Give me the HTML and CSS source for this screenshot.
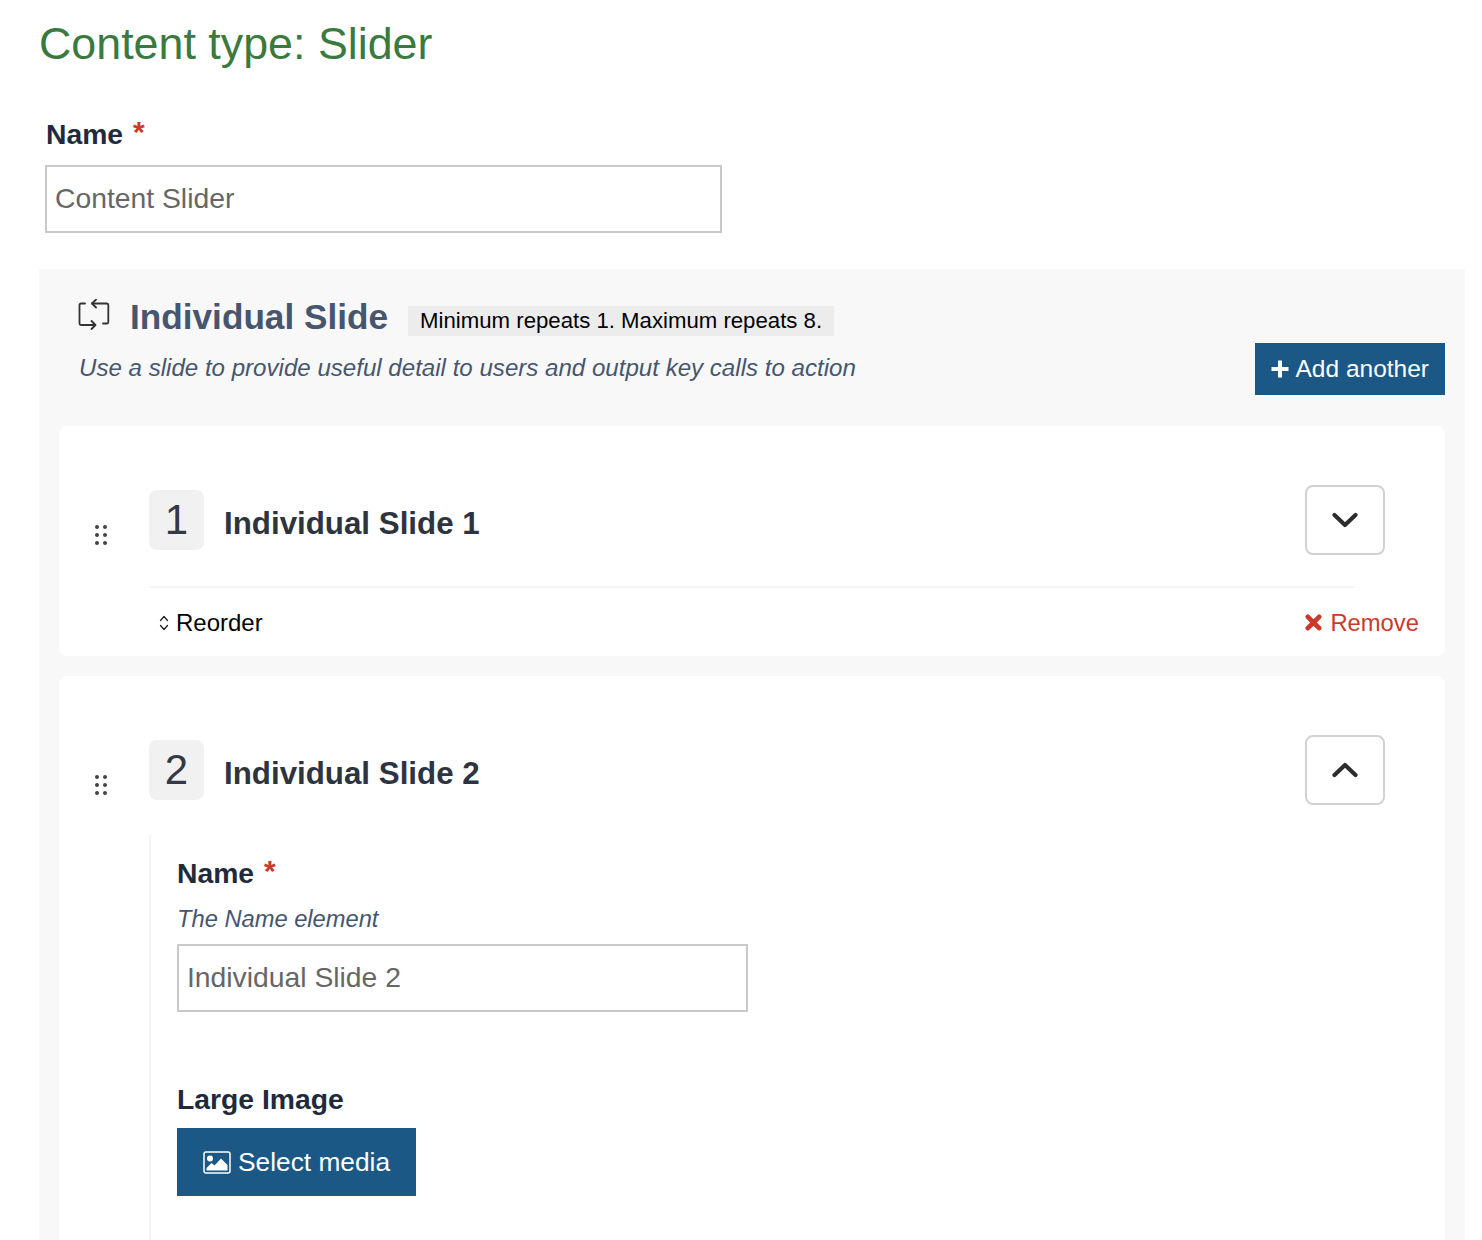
FILE: index.html
```html
<!DOCTYPE html>
<html>
<head>
    <title>Content type: Slider</title>
    <link rel="stylesheet" href="styles.css">
</head>
<body>
    <h1 class="page-title">Content type: Slider</h1>

    <div class="field top-field">
        <label class="field-label">Name <span class="required">*</span></label>
        <input type="text" class="text-input wide" value="Content Slider">
    </div>

    <section class="repeater">
        <div class="repeater-head">
            <div class="repeater-info">
                <div class="repeater-title-row">
                    <svg class="repeat-icon" width="32" height="32" viewBox="0 0 32 32" fill="none" stroke="#333" stroke-width="1.8" stroke-linecap="round" stroke-linejoin="round">
                        <path d="M7 4.500H3a1.500 1.500 0 0 0-1.500 1.500V24.500a1.500 1.500 0 0 0 1.500 1.500H17"/>
                        <path d="M13.500 22l4 4-4 4"/>
                        <path d="M14 4.500H28.800a1.500 1.500 0 0 1 1.500 1.500V23a1.500 1.500 0 0 1-1.500 1.500H25"/>
                        <path d="M18 0.500l-4 4 4 4"/>
                    </svg>
                    <h2 class="repeater-title">Individual Slide</h2>
                    <span class="repeat-limits">Minimum repeats 1. Maximum repeats 8.</span>
                </div>
                <p class="repeater-desc">Use a slide to provide useful detail to users and output key calls to action</p>
            </div>
            <button class="btn add-btn">
                <svg width="18" height="18" viewBox="0 0 18 18" fill="#fff"><path d="M7 0.500h4V7h6.500v4H11v6.500H7V11H0.500V7H7z"/></svg>
                Add another
            </button>
        </div>

        <div class="slide-card">
            <div class="slide-head">
                <svg class="drag-icon" width="14" height="22" viewBox="0 0 14 22" fill="#444">
                    <circle cx="3" cy="3" r="2"/><circle cx="11" cy="3" r="2"/>
                    <circle cx="3" cy="11" r="2"/><circle cx="11" cy="11" r="2"/>
                    <circle cx="3" cy="19" r="2"/><circle cx="11" cy="19" r="2"/>
                </svg>
                <span class="slide-num">1</span>
                <h3 class="slide-title">Individual Slide 1</h3>
                <button class="toggle-btn">
                    <svg width="26" height="16" viewBox="0 0 26 16" fill="none" stroke="#2d2d2d" stroke-width="4.200" stroke-linecap="round" stroke-linejoin="round"><path d="M2.500 3l10.500 10L23.500 3"/></svg>
                </button>
            </div>
            <div class="slide-foot">
                <span class="reorder">
                    <svg width="10" height="16" viewBox="0 0 10 16" fill="none" stroke="#222" stroke-width="1.300" stroke-linecap="round" stroke-linejoin="round"><path d="M1.500 5.500L5 1.500l3.500 4M1.500 10.500L5 14.500l3.500-4"/></svg>
                    Reorder
                </span>
                <span class="remove">
                    <svg width="17" height="17" viewBox="0 0 18 18" fill="none" stroke="#c93a2b" stroke-width="5" stroke-linecap="round"><path d="M3 3l12 12M15 3L3 15"/></svg>
                    Remove
                </span>
            </div>
        </div>

        <div class="slide-card">
            <div class="slide-head">
                <svg class="drag-icon" width="14" height="22" viewBox="0 0 14 22" fill="#444">
                    <circle cx="3" cy="3" r="2"/><circle cx="11" cy="3" r="2"/>
                    <circle cx="3" cy="11" r="2"/><circle cx="11" cy="11" r="2"/>
                    <circle cx="3" cy="19" r="2"/><circle cx="11" cy="19" r="2"/>
                </svg>
                <span class="slide-num">2</span>
                <h3 class="slide-title">Individual Slide 2</h3>
                <button class="toggle-btn">
                    <svg width="26" height="16" viewBox="0 0 26 16" fill="none" stroke="#2d2d2d" stroke-width="4.200" stroke-linecap="round" stroke-linejoin="round"><path d="M2.500 13L13 3l10.500 10"/></svg>
                </button>
            </div>
            <div class="slide-body">
                <div class="field">
                    <label class="field-label">Name <span class="required">*</span></label>
                    <p class="field-help">The Name element</p>
                    <input type="text" class="text-input narrow" value="Individual Slide 2">
                </div>
                <div class="field media-field">
                    <label class="field-label">Large Image</label>
                    <button class="btn media-btn">
                        <svg width="28" height="23" viewBox="0 0 28 23"><rect x="1" y="1" width="26" height="21" rx="2" fill="none" stroke="#fff" stroke-width="1.500"/><circle cx="7" cy="7.500" r="3" fill="#fff"/><path d="M3.500 19.500v-2.500l5-5 3 2.500 6.500-7 6.500 6.500v5.500z" fill="#fff"/></svg>
                        Select media
                    </button>
                </div>
            </div>
        </div>
    </section>
</body>
</html>
```

FILE: styles.css
```css
html, body {
    height: 1240px;
    overflow: hidden;
}

body {
    margin: 0;
    padding: 0 17px 0 39px;
    background-color: #fff;
    font-family: "Liberation Sans", Arial, sans-serif;
    color: #1f2a3c;
}

.page-title {
    margin: 0;
    padding-top: 17px;
    font-size: 44.8px;
    line-height: 52px;
    font-weight: 400;
    color: #3b7a3f;
}

.field-label {
    display: block;
    font-size: 28.300px;
    line-height: 32px;
    font-weight: 700;
    color: #1f2a3c;
}

.required {
    display: inline-block;
    margin-left: 2px;
    font-size: 30px;
    line-height: 30px;
    color: #c93a2b;
    transform: translateY(-2px);
}

.top-field {
    padding: 49px 0 36px 6px;
}

.top-field .field-label {
    margin: 0 0 15px 1px;
}

.text-input {
    display: block;
    height: 68px;
    box-sizing: border-box;
    padding: 0 8px 2px;
    border: 2px solid #c9c9c9;
    background-color: #fff;
    font-family: inherit;
    font-size: 28.300px;
    color: #666;
}

.wide {
    width: 677px;
}

.narrow {
    width: 571px;
}

.repeater {
    padding: 28px 20px 0;
    background-color: #f8f8f8;
}

.repeater-head {
    display: flex;
    justify-content: space-between;
    align-items: flex-end;
    padding-bottom: 31px;
}

.repeater-info {
    padding-left: 20px;
    padding-bottom: 12px;
}

.repeater-title-row {
    display: flex;
    align-items: center;
    height: 42px;
}

.repeat-icon {
    margin: -6px 20px 0 -1px;
}

.repeater-title {
    align-self: flex-start;
    margin: 0 20px 0 0;
    font-size: 35.200px;
    line-height: 40px;
    font-weight: 700;
    color: #46566e;
}

.repeat-limits {
    margin-top: 6px;
    padding: 0 12px;
    background-color: #ececec;
    font-size: 22.200px;
    line-height: 30px;
    color: #000;
}

.repeater-desc {
    margin: 14px 0 0;
    font-size: 24.100px;
    line-height: 30px;
    font-style: italic;
    color: #46566e;
}

.btn {
    display: flex;
    align-items: center;
    border: 0;
    background-color: #1b5885;
    color: #fff;
    font-family: inherit;
}

.add-btn {
    gap: 7px;
    height: 52px;
    padding: 0 16px;
    font-size: 24.500px;
}

.slide-card {
    margin-bottom: 20px;
    border-radius: 8px;
    background-color: #fff;
}

.slide-card:last-child {
    margin-bottom: 0;
    border-radius: 8px 8px 0 0;
}

.slide-head {
    display: flex;
    align-items: center;
    padding: 59px 60px 0 35px;
}

.drag-icon {
    margin-top: 30px;
    margin-right: 41px;
}

.slide-num {
    width: 55px;
    height: 60px;
    border-radius: 8px;
    background-color: #f1f1f1;
    font-size: 42px;
    line-height: 60px;
    text-align: center;
    color: #333a45;
}

.slide-title {
    flex: 1;
    margin: 8px 0 0 20px;
    font-size: 31.300px;
    font-weight: 700;
    color: #2d3440;
}

.toggle-btn {
    display: flex;
    align-items: center;
    justify-content: center;
    width: 80px;
    height: 70px;
    border: 2px solid #d2d2d2;
    border-radius: 8px;
    background-color: #fff;
}

.slide-foot {
    display: flex;
    justify-content: space-between;
    align-items: center;
    height: 67px;
    margin: 31px 90px 0 90px;
    padding: 1px 0 0 10px;
    border-top: 2px solid #f5f5f5;
    font-size: 24px;
    color: #000;
}

.reorder, .remove {
    display: flex;
    align-items: center;
    gap: 7px;
}

.remove {
    gap: 8px;
    margin-right: -64px;
    font-size: 23.800px;
    color: #c93a2b;
}

.slide-body {
    margin: 30px 0 0 90px;
    padding: 22px 0 44px 26px;
    border-left: 2px solid #f5f5f5;
}

.field-help {
    margin: 15px 0 10px;
    font-size: 23.700px;
    line-height: 30px;
    font-style: italic;
    color: #46566e;
}

.media-field {
    margin-top: 71px;
}

.media-btn {
    gap: 7px;
    height: 68px;
    margin-top: 13px;
    padding: 0 26px;
    font-size: 26.300px;
}
```
